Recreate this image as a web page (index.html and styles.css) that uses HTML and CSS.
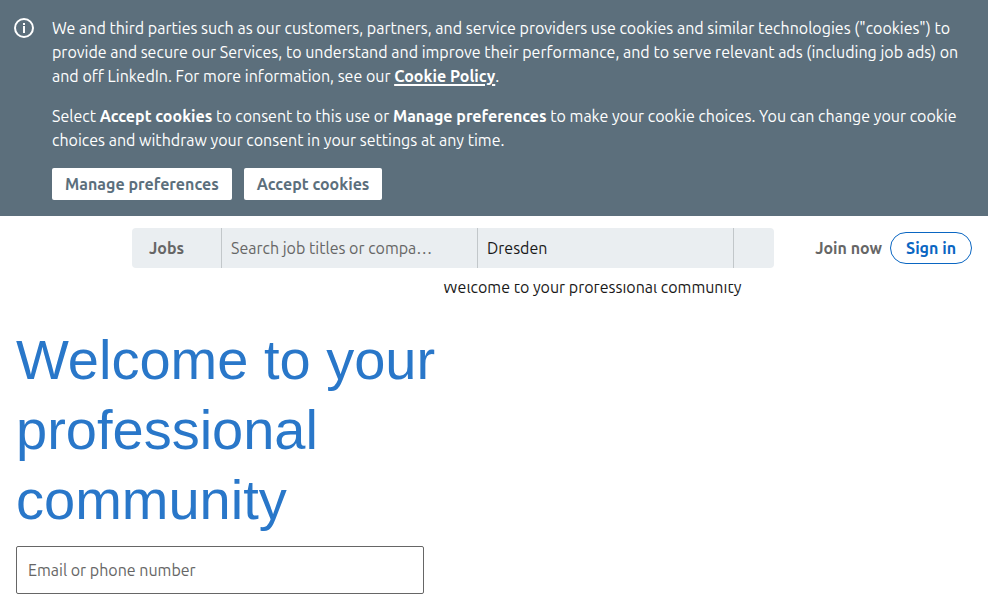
FILE: index.html
```html
<!DOCTYPE html>
<html lang="en">
<head>
<meta charset="utf-8">
<meta name="viewport" content="width=device-width, initial-scale=1">
<title>LinkedIn: Log In or Sign Up</title>
<link rel="stylesheet" href="styles.css">
</head>
<body>
<section class="consent" aria-label="Cookie consent">
  <svg class="consent-icon" viewBox="0 0 24 24" width="24" height="24" fill="none" aria-hidden="true">
    <circle cx="12" cy="12" r="9" stroke="currentColor" stroke-width="2"/>
    <path d="M11 10h2v7h-2zM11 7h2v2h-2z" fill="currentColor"/>
  </svg>
  <div class="consent-body">
    <p>We and third parties such as our customers, partners, and service providers use cookies and similar technologies ("cookies") to provide and secure our Services, to understand and improve their performance, and to serve relevant ads (including job ads) on and off LinkedIn. For more information, see our <a href="#cookies">Cookie Policy</a>.</p>
    <p>Select <strong>Accept cookies</strong> to consent to this use or <strong>Manage preferences</strong> to make your cookie choices. You can change your cookie choices and withdraw your consent in your settings at any time.</p>
    <div class="consent-actions">
      <button type="button">Manage preferences</button>
      <button type="button">Accept cookies</button>
    </div>
  </div>
</section>
<header class="header">
  <form class="search" role="search">
    <button class="search-type" type="button">Jobs</button>
    <input class="search-field" type="text" aria-label="Search job titles or companies" placeholder="Search job titles or companies">
    <input class="search-field" type="text" aria-label="Location" value="Dresden">
    <button class="search-submit" type="submit" aria-label="Search"></button>
  </form>
  <nav class="account" aria-label="Account">
    <a class="join" href="#join">Join now</a>
    <a class="sign-in" href="#signin">Sign in</a>
  </nav>
</header>
<main class="hero">
  <div class="hero-main">
    <h1>Welcome to your professional community</h1>
    <form>
      <input class="email" type="text" aria-label="Email or phone number" placeholder="Email or phone number">
    </form>
  </div>
  <div class="hero-art"><p>Welcome to your professional community</p></div>
</main>
</body>
</html>
```

FILE: styles.css
```css
* {
  box-sizing: border-box;
}

body {
  margin: 0 12px 0 0;
  background: #fff;
  color: #191919;
  font: 16px/24px Ubuntu, Roboto, "Noto Sans", sans-serif;
}

button,
input {
  font: inherit;
}

p {
  margin: 0;
}

.consent {
  display: flex;
  gap: 16px;
  padding: 16px 16px 16px 12px;
  background: #5c6f7c;
  color: #fff;
}

.consent-icon {
  flex: none;
}

.consent-body {
  display: grid;
  gap: 16px;
}

.consent a {
  color: #fff;
  font-weight: 700;
  text-decoration-thickness: 2px;
  text-underline-offset: 2px;
}

.consent-actions {
  display: flex;
  gap: 12px;
}

.consent-actions button {
  height: 32px;
  padding: 0 13px;
  border: 0;
  border-radius: 2px;
  background: #fff;
  color: #5c6f7c;
  font-weight: 700;
}

.header {
  display: flex;
  align-items: center;
  justify-content: space-between;
  padding: 12px 16px 16px 132px;
}

.search {
  display: flex;
  height: 40px;
  border-radius: 4px;
  background: #eaeef1;
  overflow: hidden;
}

.search > * {
  border: 0;
  background: transparent;
}

.search-type {
  width: 89px;
  padding: 0 17px;
  color: #666;
  font-weight: 700;
  text-align: left;
}

.search .search-field {
  width: 256px;
  padding: 0 40px 0 9px;
  border-left: 1px solid #c2c7ca;
  color: #191919;
  text-overflow: ellipsis;
}

.search .search-submit {
  width: 41px;
  border-left: 1px solid #c2c7ca;
}

.search .search-field::placeholder,
.email::placeholder {
  color: #666;
  opacity: 1;
}

.account {
  display: flex;
  align-items: center;
  gap: 8px;
  font-weight: 700;
  white-space: nowrap;
}

.account a {
  text-decoration: none;
}

.join {
  color: #666;
}

.sign-in {
  padding: 3px 15px;
  border: 1px solid #0a66c2;
  border-radius: 16px;
  color: #0a66c2;
}

.hero {
  display: grid;
  grid-template-columns: 427px 1fr;
  padding: 0 16px;
}

.hero-main {
  padding-top: 41px;
}

h1 {
  margin: 0 0 11px;
  color: #2977c9;
  font: 56px/70px "Liberation Sans", Arial, sans-serif;
}

.email {
  display: block;
  width: 408px;
  height: 48px;
  padding: 0 11px;
  border: 1px solid #666;
  border-radius: 2px;
}

.hero-art {
  overflow: hidden;
}

.hero-art p {
  margin-top: -9px;
}
```
